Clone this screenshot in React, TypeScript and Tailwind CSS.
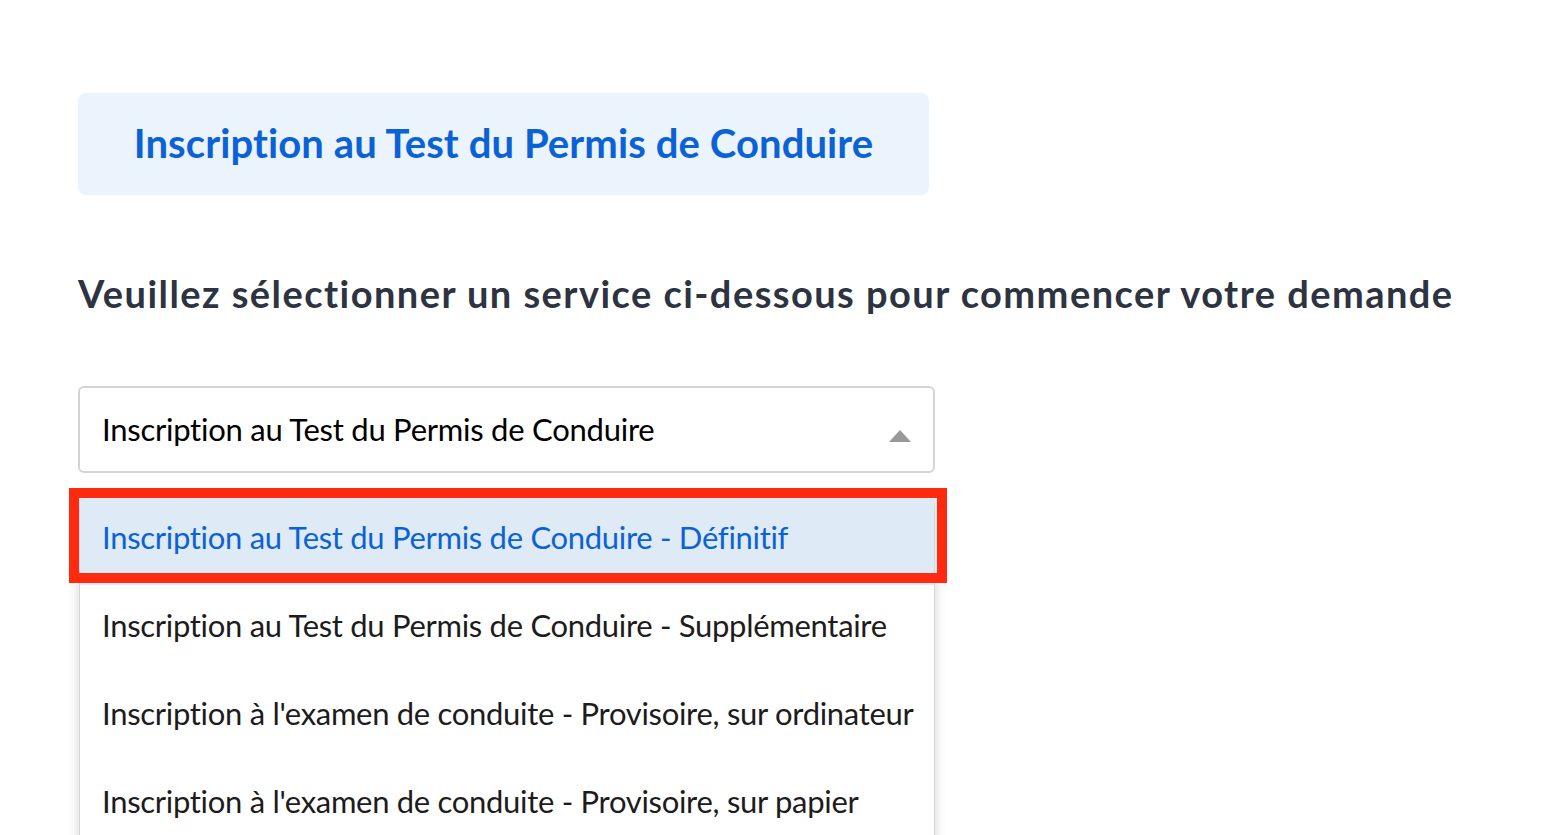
const options = [
  "Inscription au Test du Permis de Conduire - Définitif",
  "Inscription au Test du Permis de Conduire - Supplémentaire",
  "Inscription à l'examen de conduite - Provisoire, sur ordinateur",
  "Inscription à l'examen de conduite - Provisoire, sur papier",
]

export default function App() {
  return (
    <div className="h-[835px] w-[1552px] overflow-hidden bg-white font-['Lato',sans-serif]">
      <div className="pl-[78px] pt-[93px]">
        <div className="flex h-[102px] w-[851px] items-center justify-center rounded-lg bg-[#ebf3fd] pb-[2px]">
          <h1 className="text-[40px] font-bold tracking-[0.1px] text-[#0b62d6]">Inscription au Test du Permis de Conduire</h1>
        </div>
        <h2 className="mt-[73px] text-[38px] font-bold leading-[50px] tracking-[1.45px] text-[#2d3340]">
          Veuillez sélectionner un service ci-dessous pour commencer votre demande
        </h2>
        <div className="relative mt-[68px] w-[857px]">
          <div className="flex h-[87px] items-center justify-between rounded-md border-2 border-[#d4d4d4] pb-[1px] pl-[22px] pr-[22px]">
            <span className="text-[31px] tracking-[-0.25px] text-black">Inscription au Test du Permis de Conduire</span>
            <svg width="22" height="12" viewBox="0 0 22 12" className="mt-[14px]">
              <polygon points="0,12 11,0 22,12" fill="#999999" />
            </svg>
          </div>
          <div className="mt-[23px] ml-px w-[856px] overflow-hidden rounded-lg border border-[#d8d8d8] bg-white shadow-[0_2px_12px_rgba(0,0,0,0.18)]">
            {options.map((o, i) => (
              <div
                key={o}
                className={`flex h-[88px] items-center pb-[8px] pl-[22px] text-[31px] tracking-[-0.3px] ${i === 0 ? 'bg-[#deebf7] text-[#0b62d6]' : 'text-[#1c1c1c]'}`}
              >
                {o}
              </div>
            ))}
          </div>
          <div className="pointer-events-none absolute left-[-9px] top-[102px] h-[95px] w-[878px] border-[10px] border-[#ff2a10]" />
        </div>
      </div>
    </div>
  )
}
